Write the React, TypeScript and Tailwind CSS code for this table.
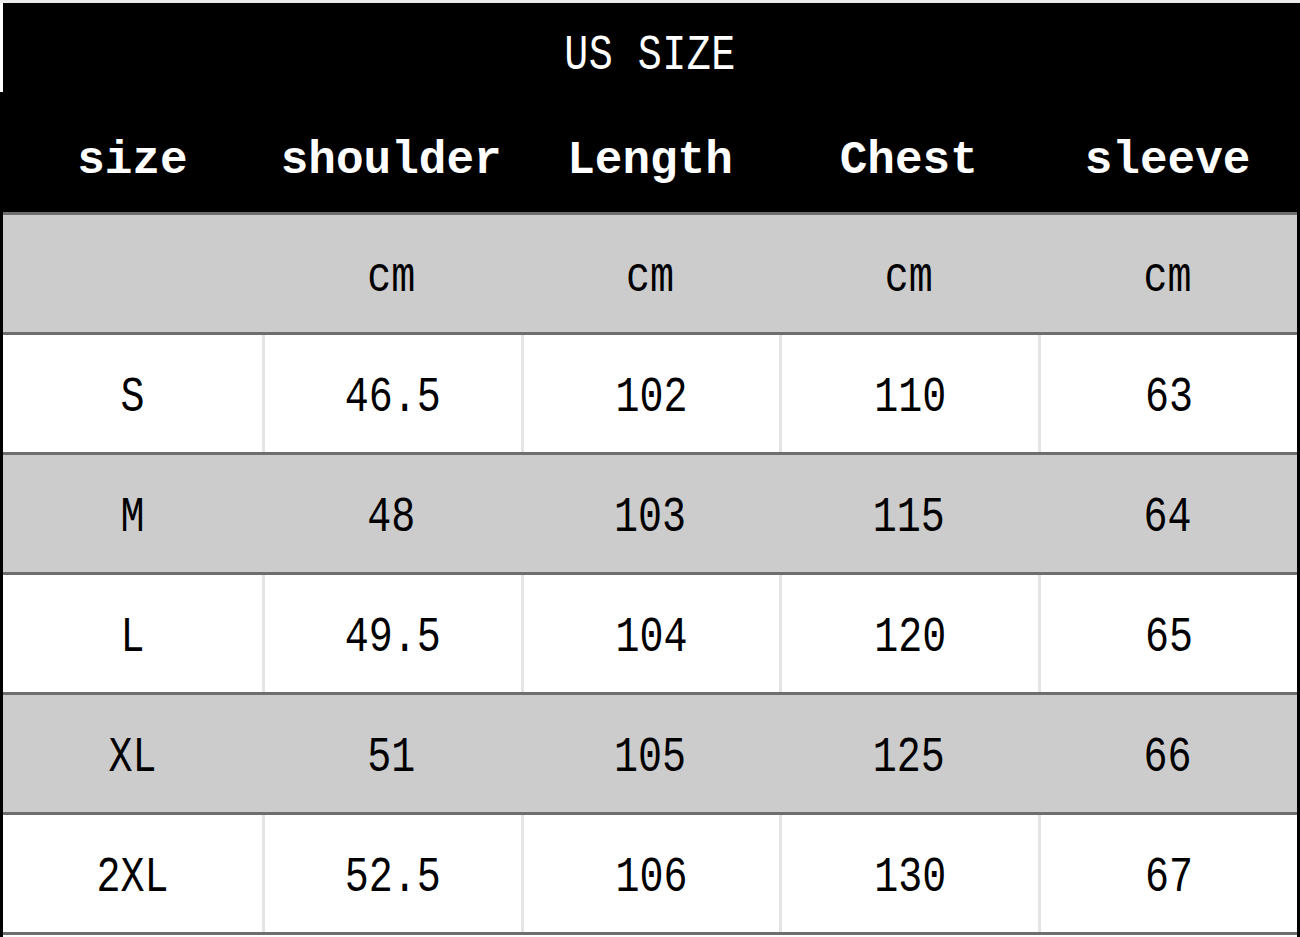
const columns = ['size', 'shoulder', 'Length', 'Chest', 'sleeve'];

const rows = [
    ['S', '46.5', '102', '110', '63'],
    ['M', '48', '103', '115', '64'],
    ['L', '49.5', '104', '120', '65'],
    ['XL', '51', '105', '125', '66'],
    ['2XL', '52.5', '106', '130', '67'],
];

const mono = "font-['Liberation_Mono','DejaVu_Sans_Mono',monospace]";

function Cell({ text, divider }: { text: string; divider: boolean }) {
    return (
        <div
            className={`flex items-center justify-center pt-[8px] ${divider ? 'border-l-[3px] border-[#e4e4e4]' : ''}`}
        >
            <span className="inline-block scale-y-125 text-[40px] leading-none text-black">{text}</span>
        </div>
    );
}

export default function App() {
    return (
        <div className={`w-[1300px] h-[937px] bg-white flex flex-col ${mono}`}>
            <div className="h-[3px] bg-[#ececec]" />
            <div className="flex flex-1">
                {/* left edge: white at the top, then black */}
                <div className="w-[3px] flex flex-col">
                    <div className="h-[89px] bg-white" />
                    <div className="flex-1 bg-black" />
                </div>

                <div className="flex-1 flex flex-col">
                    <div className="bg-black">
                        <div className="h-[100px] flex items-center justify-center pt-[6px]">
                            <span className="inline-block scale-y-125 text-[40px] leading-none text-white tracking-[0.5px]">
                                US SIZE
                            </span>
                        </div>
                        <div className="h-[109px] grid grid-cols-5">
                            {columns.map((c) => (
                                <div key={c} className="flex items-center justify-center pt-[6px]">
                                    <span className="text-[46px] font-bold leading-none text-white">{c}</span>
                                </div>
                            ))}
                        </div>
                    </div>

                    <div className="border-t-[3px] border-[#6e6e6e] bg-[#cccccc] h-[120px] grid grid-cols-5">
                        <div />
                        {columns.slice(1).map((c) => (
                            <div key={c} className="flex items-center justify-center pt-[8px]">
                                <span className="inline-block scale-y-125 text-[40px] leading-none text-black">cm</span>
                            </div>
                        ))}
                    </div>

                    {rows.map((r, i) => (
                        <div
                            key={r[0]}
                            className={`border-t-[3px] border-[#6e6e6e] h-[120px] grid grid-cols-5 ${
                                i % 2 === 0 ? 'bg-white' : 'bg-[#cccccc]'
                            }`}
                        >
                            {r.map((v, j) => (
                                <Cell key={j} text={v} divider={i % 2 === 0 && j > 0} />
                            ))}
                        </div>
                    ))}

                    <div className="border-t-[3px] border-[#6e6e6e] flex-1 bg-white" />
                </div>

                <div className="w-[3px] bg-black" />
            </div>
        </div>
    );
}
